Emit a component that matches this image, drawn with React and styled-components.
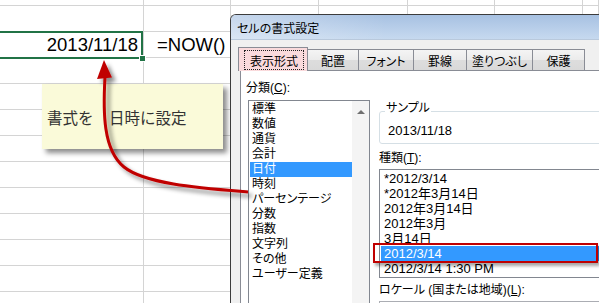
import React from 'react'
import styled, { createGlobalStyle } from 'styled-components'

const GlobalStyle = createGlobalStyle`
  html, body {
    margin: 0;
    padding: 0;
    background: #fff;
  }
  body {
    font-family: "Liberation Sans", "Noto Sans CJK JP", sans-serif;
    color: #000;
  }
`

const COLUMNS = 7
const ROWS = 13

const categories = [
    '標準', '数値', '通貨', '会計', '日付', '時刻', 'パーセンテージ',
    '分数', '指数', '文字列', 'その他', 'ユーザー定義',
]

const types = [
    '*2012/3/14', '*2012年3月14日', '2012年3月14日', '2012年3月',
    '3月14日', '2012/3/14', '2012/3/14 1:30 PM',
]

const tabs = [
    { label: '配置', w: 51 },
    { label: 'フォント', w: 55 },
    { label: '罫線', w: 53 },
    { label: '塗りつぶし', w: 66 },
    { label: '保護', w: 52 },
]

function SheetCell({ row, col }) {
    if (row === 2 && col === 0) {
        return <SelectedCell $align="flex-end">2013/11/18</SelectedCell>
    }
    if (row === 2 && col === 1) {
        return <Cell $align="flex-start" $pad="0 0 0 13px">=NOW()</Cell>
    }
    return <Cell />
}

function App() {
    const cells = []
    for (let r = 0; r < ROWS; r++) {
        for (let c = 0; c < COLUMNS; c++) {
            cells.push(<SheetCell key={r + '-' + c} row={r} col={c} />)
        }
    }

    return (
        <Page>
            <GlobalStyle />
            <Sheet>{cells}</Sheet>

            <Callout>書式を　日時に設定</Callout>

            <Dialog>
                <TitleBar>セルの書式設定</TitleBar>
                <DialogBody>
                    <TabRow>
                        <ActiveTab>
                            <FocusBox>表示形式</FocusBox>
                        </ActiveTab>
                        {tabs.map(t => (
                            <Tab key={t.label} $w={t.w}>{t.label}</Tab>
                        ))}
                    </TabRow>

                    <Panel>
                        <LeftCol>
                            <Label>分類(<u>C</u>):</Label>
                            <CategoryList>
                                <Items>
                                    {categories.map(c => (
                                        <Item key={c} $selected={c === '日付'}>{c}</Item>
                                    ))}
                                </Items>
                                <ScrollBar>
                                    <svg width="8" height="5" viewBox="0 0 8 5">
                                        <path d="M0 5 L4 1 L8 5 Z" fill="#707070" />
                                    </svg>
                                </ScrollBar>
                            </CategoryList>
                        </LeftCol>

                        <RightCol>
                            <GroupBox>
                                <GroupLabel>サンプル</GroupLabel>
                                <SampleValue>2013/11/18</SampleValue>
                            </GroupBox>
                            <Label $mt={7}>種類(<u>T</u>):</Label>
                            <TypeList>
                                {types.map((t, i) => (
                                    <TypeItem key={t} $selected={i === 5}>{t}</TypeItem>
                                ))}
                            </TypeList>
                            <Label $mt={5}>ロケール (国または地域)(<u>L</u>):</Label>
                            <LocaleBox />
                        </RightCol>
                    </Panel>
                </DialogBody>
            </Dialog>

            <RedFrame />

            <ArrowLayer width="599" height="303" viewBox="0 0 599 303">
                <defs>
                    <filter id="shadow" x="-20%" y="-20%" width="140%" height="140%">
                        <feDropShadow dx="4" dy="4" stdDeviation="2.2" floodColor="#000" floodOpacity="0.45" />
                    </filter>
                </defs>
                <g filter="url(#shadow)">
                    <path
                        d="M105 77 C103 112, 103 150, 124 167 C145 184, 200 188, 248 192"
                        stroke="#c00000"
                        strokeWidth="3"
                        fill="none"
                    />
                    <polygon points="104,60 97,79 112,77.5" fill="#c00000" />
                </g>
            </ArrowLayer>
        </Page>
    )
}

export default App

const Page = styled.div`
    position: relative;
    width: 599px;
    height: 303px;
    overflow: hidden;
    background: #fff;
`

const Sheet = styled.div`
    display: grid;
    grid-template-columns: 144px 87px 88px 89px 87px 88px 1fr;
    grid-template-rows: 6px;
    grid-auto-rows: 26px;
`

const Cell = styled.div`
    box-sizing: border-box;
    position: relative;
    display: flex;
    align-items: center;
    justify-content: ${p => p.$align || 'flex-start'};
    padding: ${p => p.$pad || '0 5px 0 0'};
    border-right: 1px solid #d4d4d4;
    border-bottom: 1px solid #d4d4d4;
    font-family: "Liberation Sans", sans-serif;
    font-size: 18.5px;
    color: #000;
    white-space: nowrap;
`

const SelectedCell = styled(Cell)`
    &::after {
        content: "";
        position: absolute;
        top: -1px;
        left: -3px;
        right: 0;
        bottom: -2px;
        border: 2px solid #217346;
    }
    &::before {
        content: "";
        position: absolute;
        right: -3px;
        bottom: -5px;
        width: 5px;
        height: 5px;
        background: #217346;
        border: 1px solid #fff;
        z-index: 1;
    }
`

const Callout = styled.div`
    position: absolute;
    left: 42px;
    top: 84px;
    width: 181px;
    height: 65px;
    box-sizing: border-box;
    padding-left: 5px;
    display: flex;
    align-items: center;
    background: #fafad9;
    box-shadow: 4px 4px 5px rgba(0, 0, 0, 0.45);
    font-family: "Noto Sans CJK JP", sans-serif;
    font-size: 15.5px;
    color: #333;
`

const Dialog = styled.div`
    position: absolute;
    left: 230px;
    top: 14px;
    width: 390px;
    height: 310px;
    border-left: 1px solid #3c3c3c;
    border-top: 1px solid #3c3c3c;
    border-top-left-radius: 6px;
    overflow: hidden;
    background: #f0f0f0;
    font-family: "Liberation Sans", "Noto Sans CJK JP", sans-serif;
    font-size: 12px;
    font-feature-settings: "palt";
`

const TitleBar = styled.div`
    height: 24px;
    display: flex;
    align-items: center;
    padding-left: 6px;
    background: linear-gradient(to right, rgba(255, 255, 255, 0.35), rgba(255, 255, 255, 0) 40%),
        linear-gradient(to bottom, #a7c1e2, #c6d9ef);
    border-bottom: 1px solid #b9c9dc;
    font-family: "Noto Sans CJK JP", sans-serif;
    font-size: 12px;
    color: #000;
`

const DialogBody = styled.div`
    padding: 7px 0 0 9px;
`

const TabRow = styled.div`
    display: flex;
    align-items: flex-end;
    height: 23px;
    margin-left: -2px;
    position: relative;
    z-index: 1;
`

const Tab = styled.div`
    box-sizing: border-box;
    width: ${p => p.$w}px;
    height: 21px;
    display: flex;
    align-items: center;
    justify-content: center;
    border-top: 1px solid #898c95;
    border-right: 1px solid #898c95;
    background: linear-gradient(to bottom, #f4f4f4, #ebebeb 50%, #dddddd 51%, #d9d9d9);
    font-family: "Noto Sans CJK JP", sans-serif;
    font-size: 12px;
`

const ActiveTab = styled.div`
    box-sizing: border-box;
    width: 70px;
    height: 24px;
    margin-bottom: -1px;
    padding: 2px 3px 1px 5px;
    border: 1px solid #898c95;
    border-bottom: none;
    background: #fadadc;
    display: flex;
`

const FocusBox = styled.div`
    flex: 1;
    display: flex;
    align-items: center;
    justify-content: center;
    border: 1px dotted #222;
    font-family: "Noto Sans CJK JP", sans-serif;
    font-size: 12px;
`

const Panel = styled.div`
    box-sizing: border-box;
    height: 260px;
    display: flex;
    padding: 10px 0 0 5px;
    border: 1px solid #898c95;
    background: #fff;
`

const LeftCol = styled.div`
    display: flex;
    flex-direction: column;
`

const Label = styled.div`
    height: 15px;
    line-height: 15px;
    margin-top: ${p => p.$mt || 0}px;
    white-space: nowrap;
    font-size: 12px;

    u {
        text-decoration-thickness: 1px;
        text-underline-offset: 1px;
    }
`

const CategoryList = styled.div`
    box-sizing: border-box;
    width: 122px;
    height: 210px;
    margin: 4px 0 0 2px;
    border: 1px solid #828790;
    display: flex;
`

const Items = styled.div`
    flex: 1;
    padding: 1px 0 0 1px;
`

const Item = styled.div`
    height: 15px;
    line-height: 15px;
    padding-left: 2px;
    white-space: nowrap;
    font-size: 12px;
    background: ${p => (p.$selected ? '#3399ff' : 'transparent')};
    color: ${p => (p.$selected ? '#fff' : '#000')};
`

const ScrollBar = styled.div`
    width: 17px;
    background: #f4f4f4;
    display: flex;
    justify-content: center;
    padding-top: 8px;
    box-sizing: border-box;
`

const RightCol = styled.div`
    display: flex;
    flex-direction: column;
    width: 240px;
    margin-left: 9px;
`

const GroupBox = styled.div`
    position: relative;
    box-sizing: border-box;
    height: 33px;
    margin-top: 30px;
    padding: 11px 0 0 8px;
    border: 1px solid #d5dfe5;
    border-radius: 3px;
`

const GroupLabel = styled.span`
    position: absolute;
    left: 5px;
    top: -11px;
    padding: 0 1px;
    line-height: 15px;
    background: #fff;
    font-size: 12px;
`

const SampleValue = styled.div`
    line-height: 15px;
    font-size: 13px;
`

const TypeList = styled.div`
    box-sizing: border-box;
    height: 109px;
    margin-top: 3px;
    padding: 1px 0 0 1px;
    border: 1px solid #828790;
`

const TypeItem = styled.div`
    height: 15px;
    line-height: 15px;
    padding-left: 3px;
    white-space: nowrap;
    font-size: 13px;
    background: ${p => (p.$selected ? '#3399ff' : 'transparent')};
    color: ${p => (p.$selected ? '#fff' : '#000')};
`

const LocaleBox = styled.div`
    height: 22px;
    margin-top: 3px;
    border: 1px solid #abadb3;
`

const RedFrame = styled.div`
    position: absolute;
    left: 373px;
    top: 243px;
    width: 225px;
    height: 20px;
    box-sizing: border-box;
    border: 2px solid #c00000;
    box-shadow: 2px 3px 3px rgba(0, 0, 0, 0.35);
`

const ArrowLayer = styled.svg`
    position: absolute;
    left: 0;
    top: 0;
    pointer-events: none;
    overflow: visible;
`
